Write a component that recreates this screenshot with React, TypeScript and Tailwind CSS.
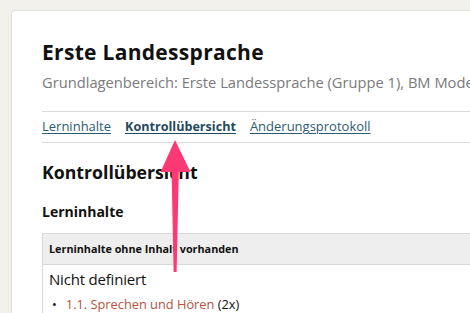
import React from "react";

export default function App() {
  return (
    <div className="w-[470px] h-[313px] overflow-hidden bg-[#f1f0eb] pl-[11px] pt-[10px] relative" style={{ fontFamily: "'Open Sans', sans-serif" }}>
      <div className="w-[480px] h-[330px] bg-white border border-[#e2e1dc] rounded-[4px] pl-[30px] pt-[27px]">
        <h1 className="text-[21px] leading-[28px] font-bold text-[#111] tracking-[0.3px] whitespace-nowrap">Erste Landessprache</h1>
        <p className="mt-[5px] text-[14.7px] leading-[22px] text-[#7a7a7a] whitespace-nowrap">
          Grundlagenbereich: Erste Landessprache (Gruppe 1), BM Modell
        </p>
        <div className="mt-[18px] border-t border-b border-[#dcdcdc] h-[32px] flex items-center gap-[14px] text-[13px] text-[#2c5c70] whitespace-nowrap">
          <a className="underline underline-offset-2">Lerninhalte</a>
          <a className="underline underline-offset-2 font-bold text-[12.6px] text-[#1f4a5c]">Kontrollübersicht</a>
          <a className="underline underline-offset-2">Änderungsprotokoll</a>
        </div>
        <h2 className="mt-[17px] text-[17.7px] leading-[24px] font-bold text-[#111]">Kontrollübersicht</h2>
        <h3 className="mt-[18px] text-[14px] leading-[20px] font-bold text-[#111]">Lerninhalte</h3>
        <div className="mt-[11px] border border-[#d8d8d8]">
          <div className="bg-[#eeeeee] h-[31px] border-b border-[#d8d8d8] px-[6px] flex items-center text-[10.8px] font-bold text-[#111]">
            Lerninhalte ohne Inhalt vorhanden
          </div>
          <div className="px-[6px] pt-[3px]">
            <div className="text-[15px] leading-[22px] text-[#111] tracking-[-0.2px]">Nicht definiert</div>
            <ul className="mt-[5px] pl-[3px] text-[12.8px] leading-[18px]">
              <li className="flex items-center gap-[9px]">
                <span className="text-[#111]">•</span>
                <span><a className="text-[#b4523d]">1.1. Sprechen und Hören</a> <span className="text-[#111]">(2x)</span></span>
              </li>
            </ul>
          </div>
        </div>
      </div>
      <svg className="absolute left-0 top-0 pointer-events-none" width="470" height="313" viewBox="0 0 470 313">
        <path d="M175 140 L190.5 172 L178.8 172 L176.6 272 L173.6 272 L171.6 172 L160.5 172 Z" fill="#fb3a75" />
      </svg>
    </div>
  );
}
